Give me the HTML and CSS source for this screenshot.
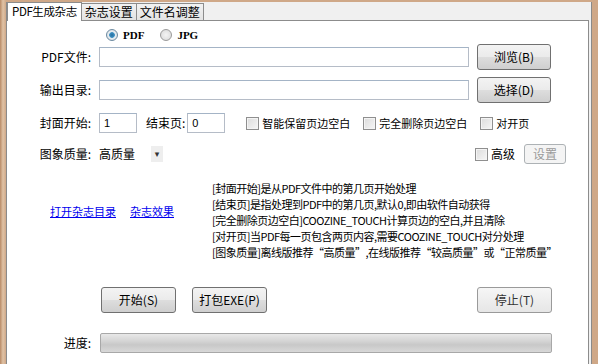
FILE: index.html
```html
<!DOCTYPE html>
<html>
<head>
    <title>PDF生成杂志</title>
    <link rel="stylesheet" href="styles.css">
</head>
<body>
    <div class="window">
        <div class="tabs">
            <div class="tab active">PDF生成杂志</div>
            <div class="tab">杂志设置</div>
            <div class="tab">文件名调整</div>
        </div>
        <div class="panel">
            <div class="radio-row">
                <label class="radio"><span class="dot checked"></span>PDF</label>
                <label class="radio"><span class="dot"></span>JPG</label>
            </div>

            <div class="row row-file">
                <span class="label">PDF文件:</span>
                <div class="input wide"></div>
                <button class="btn">浏览(B)</button>
            </div>

            <div class="row row-file">
                <span class="label">输出目录:</span>
                <div class="input wide"></div>
                <button class="btn">选择(D)</button>
            </div>

            <div class="row row-opts">
                <span class="label">封面开始:</span>
                <div class="input small">1</div>
                <span class="label-inline">结束页:</span>
                <div class="input small">0</div>
                <label class="check first"><span class="box"></span>智能保留页边空白</label>
                <label class="check"><span class="box"></span>完全删除页边空白</label>
                <label class="check"><span class="box"></span>对开页</label>
            </div>

            <div class="row row-quality">
                <span class="label">图象质量:</span>
                <span class="combo">高质量</span>
                <span class="arrow">&#9662;</span>
                <label class="check adv"><span class="box"></span>高级</label>
                <button class="btn small-btn" disabled>设置</button>
            </div>

            <div class="info">
                <div class="links">
                    <a href="#">打开杂志目录</a>
                    <a href="#">杂志效果</a>
                </div>
                <div class="notes">
                    <div>[封面开始]是从PDF文件中的第几页开始处理</div>
                    <div>[结束页]是指处理到PDF中的第几页,默认0,即由软件自动获得</div>
                    <div>[完全删除页边空白]COOZINE_TOUCH计算页边的空白,并且清除</div>
                    <div>[对开页]当PDF每一页包含两页内容,需要COOZINE_TOUCH对分处理</div>
                    <div>[图象质量]离线版推荐“高质量”,在线版推荐“较高质量”或“正常质量”</div>
                </div>
            </div>

            <div class="row row-actions">
                <button class="btn">开始(S)</button>
                <button class="btn">打包EXE(P)</button>
                <button class="btn stop">停止(T)</button>
            </div>

            <div class="row row-progress">
                <span class="label">进度:</span>
                <div class="progress"></div>
            </div>
        </div>
    </div>
</body>
</html>
```

FILE: styles.css
```css
* {
    box-sizing: border-box;
}
body {
    margin: 0;
    width: 598px;
    height: 364px;
    overflow: hidden;
    font-family: "Noto Sans CJK SC", "DejaVu Sans", sans-serif;
    font-size: 12px;
    line-height: 16px;
    color: #000;
    background: linear-gradient(90deg, #b88a66 0px, #e0c3a6 3px, #cfa888 6px);
}
.window {
    margin: 2px 0 0 6px;
    width: 586px;
    height: 362px;
    border-left: 1px solid #8a8a8a;
    border-right: 1px solid #8a8a8a;
    background: #f0f0f0;
    display: flex;
    flex-direction: column;
}
.tabs {
    display: flex;
    height: 18px;
    flex: none;
    align-items: flex-end;
    padding-left: 1px;
}
.tab {
    height: 17px;
    line-height: 16px;
    padding: 0 3px;
    border: 1px solid #8c8c8c;
    border-bottom: none;
    margin-left: -1px;
    background: linear-gradient(#f2f2f2, #e3e3e3);
    font-size: 12px;
    white-space: nowrap;
}
.tab.active {
    background: #fff;
    position: relative;
    z-index: 1;
    margin-bottom: -1px;
    height: 19px;
    line-height: 17px;
    padding: 0 4px;
    font-size: 11.5px;
    letter-spacing: -0.4px;
}
.panel {
    flex: 1;
    background: #fff;
    border-top: 1px solid #8c8c8c;
    border-right: 1px solid #8c8c8c;
    margin-right: 2px;
    display: flex;
    flex-direction: column;
}
.radio-row {
    display: flex;
    flex: none;
    height: 16px;
    margin-top: 6px;
    padding-left: 99px;
    gap: 16px;
    font-family: "Liberation Serif", serif;
    font-size: 11px;
    font-weight: bold;
}
.radio {
    display: flex;
    align-items: center;
    gap: 5px;
}
.dot {
    width: 12px;
    height: 12px;
    border-radius: 50%;
    border: 1px solid #9a9a9a;
    background: radial-gradient(circle, #f4f4f4 0, #d8d8d8 100%);
}
.dot.checked {
    background: radial-gradient(circle, #2a6f9e 0, #3b8fc2 35%, #e8eef2 45%, #cfd6dc 100%);
    border-color: #6c8aa0;
}
.row {
    display: flex;
    flex: none;
    align-items: center;
}
.label {
    width: 86px;
    text-align: right;
    padding-right: 2px;
    margin-right: 6px;
    white-space: nowrap;
}
.row-file {
    height: 26px;
    margin-top: 1px;
}
.row-file + .row-file {
    margin-top: 7px;
}
.input {
    height: 20px;
    border: 1px solid #b5bcc7;
    border-top-color: #a4b4c6;
    background: #fff;
    padding: 0 4px;
    line-height: 18px;
    font-family: "Liberation Sans", sans-serif;
    font-size: 11px;
}
.input.wide {
    width: 370px;
}
.input.small {
    width: 38px;
    height: 20px;
}
.btn {
    font-family: "Noto Sans CJK SC", sans-serif;
    font-size: 12px;
    line-height: 16px;
    width: 74px;
    height: 26px;
    border: 1px solid #707070;
    border-radius: 3px;
    background: linear-gradient(#f3f3f3 0%, #ebebeb 48%, #dddddd 52%, #cfcfcf 100%);
    color: #000;
    padding: 0;
    margin-left: 8px;
    white-space: nowrap;
}
.btn:disabled {
    color: #9a9a9a;
    border-color: #adb2b5;
    background: #f4f4f4;
}
.row-opts {
    height: 20px;
    margin-top: 10px;
}
.label-inline {
    margin: 0 2px 0 9px;
}
.check {
    display: flex;
    align-items: center;
    gap: 3px;
    margin-left: 13px;
    white-space: nowrap;
    font-size: 11px;
}
.check.first {
    margin-left: 21px;
}
.box {
    width: 13px;
    height: 13px;
    border: 1px solid #8f8f8f;
    background: linear-gradient(135deg, #dcdcdc, #f6f6f6);
    box-shadow: inset 0 0 0 1px #f4f4f4;
}
.row-quality {
    height: 20px;
    margin-top: 11px;
}
.combo {
    width: 52px;
}
.arrow {
    width: 12px;
    height: 16px;
    line-height: 16px;
    text-align: center;
    font-size: 9px;
    color: #333;
    background: #eeeeee;
}
.check.adv {
    margin-left: 312px;
    font-size: 12px;
}
.small-btn {
    width: 42px;
    height: 20px;
    margin-left: 9px;
    font-size: 12px;
}
.info {
    display: flex;
    flex: none;
    margin-top: 16px;
    height: 80px;
}
.links {
    padding-left: 43px;
    padding-top: 23px;
    display: flex;
    gap: 14px;
}
.links a {
    color: #0000ee;
    text-decoration: underline;
    font-size: 11px;
}
.notes {
    margin-left: 38px;
    line-height: 16px;
    font-size: 11px;
    letter-spacing: -0.5px;
    white-space: nowrap;
}
.row-actions {
    height: 26px;
    margin-top: 27px;
    padding-left: 86px;
}
.row-actions .btn {
    width: 75px;
    margin-left: 8px;
}
.row-actions .btn + .btn {
    margin-left: 16px;
}
.row-actions .stop {
    margin-left: 210px !important;
    color: #333;
    border-color: #9a9a9a;
    background: linear-gradient(#f6f6f6, #e6e6e6);
}
.row-progress {
    height: 20px;
    margin-top: 20px;
}
.progress {
    width: 452px;
    height: 20px;
    margin-left: 1px;
    border: 1px solid #a8a8a8;
    border-radius: 2px;
    background: linear-gradient(#e8e8e8 0%, #d4d4d4 40%, #c8c8c8 60%, #d8d8d8 100%);
}
```
